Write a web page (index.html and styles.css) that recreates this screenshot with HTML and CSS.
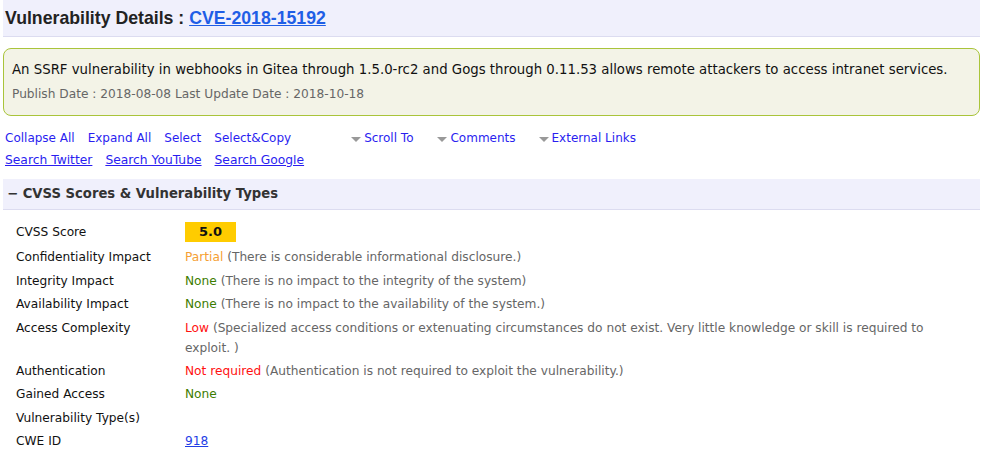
FILE: index.html
```html
<!DOCTYPE html>
<html>
<head>
<meta charset="utf-8">
<link rel="stylesheet" href="styles.css">
</head>
<body>
<div class="page">
  <h1 class="title">Vulnerability Details : <a href="#" class="cve">CVE-2018-15192</a></h1>
  <div class="summary">
    <div class="desc">An SSRF vulnerability in webhooks in Gitea through 1.5.0-rc2 and Gogs through 0.11.53 allows remote attackers to access intranet services.</div>
    <div class="dates">Publish Date : 2018-08-08 Last Update Date : 2018-10-18</div>
  </div>
  <div class="links">
    <div class="linkrow row1">
      <a href="#" class="plain">Collapse All</a>
      <a href="#" class="plain">Expand All</a>
      <a href="#" class="plain">Select</a>
      <a href="#" class="plain">Select&amp;Copy</a>
      <span class="drop"><span class="tri"></span><a href="#" class="plain">Scroll To</a></span>
      <span class="drop"><span class="tri"></span><a href="#" class="plain">Comments</a></span>
      <span class="drop"><span class="tri"></span><a href="#" class="plain">External Links</a></span>
    </div>
    <div class="linkrow">
      <a href="#" class="ul">Search Twitter</a>
      <a href="#" class="ul">Search YouTube</a>
      <a href="#" class="ul">Search Google</a>
    </div>
  </div>
  <h2 class="section">− CVSS Scores &amp; Vulnerability Types</h2>
  <table class="cvss">
    <tr class="first"><th>CVSS Score</th><td><span class="score">5.0</span></td></tr>
    <tr><th>Confidentiality Impact</th><td><span class="partial">Partial</span> <span class="note">(There is considerable informational disclosure.)</span></td></tr>
    <tr><th>Integrity Impact</th><td><span class="none">None</span> <span class="note">(There is no impact to the integrity of the system)</span></td></tr>
    <tr><th>Availability Impact</th><td><span class="none">None</span> <span class="note">(There is no impact to the availability of the system.)</span></td></tr>
    <tr><th>Access Complexity</th><td><span class="bad">Low</span> <span class="note">(Specialized access conditions or extenuating circumstances do not exist. Very little knowledge or skill is required to exploit. )</span></td></tr>
    <tr><th>Authentication</th><td><span class="bad">Not required</span> <span class="note">(Authentication is not required to exploit the vulnerability.)</span></td></tr>
    <tr><th>Gained Access</th><td><span class="none">None</span></td></tr>
    <tr><th>Vulnerability Type(s)</th><td></td></tr>
    <tr><th>CWE ID</th><td><a href="#" class="cwe">918</a></td></tr>
  </table>
</div>
</body>
</html>
```
FILE: styles.css
```css
html, body { margin: 0; padding: 0; background: #fff; }
body { font-family: "DejaVu Sans", Verdana, sans-serif; font-size: 12.2px; color: #111; }
.page { padding: 0 3px 0 3px; }
.title {
  margin: 0;
  padding: 8px 2px 0 2px;
  height: 28px;
  background: #f0f0fc;
  border-bottom: 1px solid #dcdcf0;
  font-family: "Liberation Sans", Arial, sans-serif;
  font-size: 17.7px;
  font-weight: bold;
  color: #222;
}
.cve { color: #1f5ee6; text-decoration: underline; }
.summary {
  margin-top: 11px;
  background: #f3f3e7;
  border: 1px solid #a9c43a;
  border-radius: 8px;
  padding: 12px 8px 12px 8px;
}
.desc { font-size: 13.3px; color: #111; line-height: 18px; }
.dates { font-size: 12.2px; color: #666; line-height: 18px; margin-top: 6px; }
.links { margin-top: 11px; padding-left: 2px; }
.linkrow { display: flex; line-height: 22px; font-size: 12.3px; }
.linkrow.row1 { font-size: 12px; }
.linkrow a { margin-right: 13px; color: #2a1ef0; }
.plain { text-decoration: none; }
.ul { text-decoration: underline; }
.drop { display: inline-flex; align-items: center; margin-left: 47px; }
.drop + .drop { margin-left: 11px; }
.drop + .drop + .drop { margin-left: 10px; }
.tri {
  width: 0; height: 0;
  border-left: 5px solid transparent;
  border-right: 5px solid transparent;
  border-top: 5px solid #999;
  margin-right: 3px;
  margin-top: 2px;
}
.section {
  margin: 8px 0 0 0;
  padding: 0 4px;
  height: 30px;
  line-height: 29px;
  background: #f0f0fc;
  border-bottom: 1px solid #dcdcf0;
  font-size: 13.2px;
  font-weight: bold;
  color: #333;
}
.cvss {
  border-collapse: collapse;
  margin: 10px 0 0 10px;
  width: 942px;
}
.cvss th {
  text-align: left;
  font-weight: normal;
  width: 169px;
  padding: 2px 0 1.5px 3px;
  vertical-align: top;
  line-height: 20px;
  color: #111;
}
.cvss td { padding: 2px 0 1.4px 0; vertical-align: top; line-height: 20px; }
.cvss .first th, .cvss .first td { padding-bottom: 3px; }
.score {
  display: inline-block;
  vertical-align: top;
  width: 51px; height: 20px;
  line-height: 20px;
  background: #ffcc00;
  text-align: center;
  font-weight: bold;
  font-size: 13px;
}
.partial { color: #f5a033; }
.none { color: #3d7d00; }
.bad { color: #ff1111; }
.note { color: #666; }
.cwe { color: #1f3ee6; text-decoration: underline; }
```
